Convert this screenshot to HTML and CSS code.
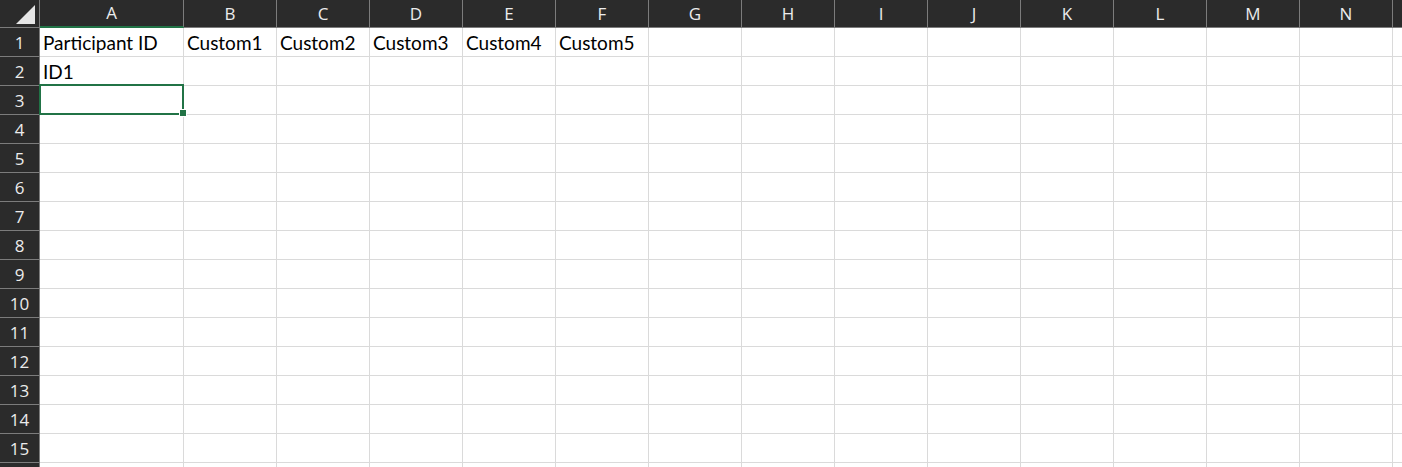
FILE: index.html
```html
<!DOCTYPE html>
<html lang="en">
<head>
    <meta charset="UTF-8">
    <title>Sheet1</title>
    <link rel="stylesheet" href="styles.css">
</head>
<body>
    <div class="sheet" id="sheet"></div>

    <script>
        const sheet = document.getElementById('sheet');
        const columns = ['A', 'B', 'C', 'D', 'E', 'F', 'G', 'H', 'I', 'J', 'K', 'L', 'M', 'N', ''];
        const data = {
            1: ['Participant ID', 'Custom1', 'Custom2', 'Custom3', 'Custom4', 'Custom5'],
            2: ['ID1']
        };

        // header row
        const corner = document.createElement('div');
        corner.className = 'corner';
        corner.innerHTML = '<svg width="20" height="20" viewBox="0 0 20 20"><polygon points="19,0 19,19 0,19" fill="#e6e6e6"/></svg>';
        sheet.appendChild(corner);

        columns.forEach((col, i) => {
            const head = document.createElement('div');
            head.className = 'col-head' + (i === 0 ? ' active' : '') + (col === '' ? ' last' : '');
            head.textContent = col;
            sheet.appendChild(head);
        });

        for (let r = 1; r <= 16; r++) {
            const rowHead = document.createElement('div');
            rowHead.className = 'row-head';
            // row 16 is only a sliver at the bottom edge
            rowHead.textContent = r < 16 ? r : '';
            sheet.appendChild(rowHead);

            columns.forEach((col, i) => {
                const cell = document.createElement('div');
                cell.className = 'cell' + (col === '' ? ' last' : '');
                const values = data[r] || [];
                if (values[i]) cell.textContent = values[i];
                if (r === 3 && i === 0) {
                    cell.classList.add('selected');
                    cell.innerHTML = '<span class="handle"></span>';
                }
                sheet.appendChild(cell);
            });
        }
    </script>
</body>
</html>
```

FILE: styles.css
```css
html, body {
    margin: 0;
    padding: 0;
    height: 100%;
    overflow: hidden;
    background: #ffffff;
}

.sheet {
    display: grid;
    grid-template-columns: 40px 144px repeat(13, 93px) 1fr;
    grid-template-rows: 28px repeat(16, 29px);
}

.corner,
.col-head,
.row-head {
    box-sizing: border-box;
    background-color: #2b2b2b;
    color: #ececec;
    font-family: "Open Sans", "Segoe UI", sans-serif;
    font-size: 17px;
    border-right: 1px solid #7c7c7c;
    border-bottom: 1px solid #7c7c7c;
}

.corner {
    display: flex;
    align-items: flex-start;
    justify-content: flex-end;
    padding: 5px 3px 0 0;
}

.corner svg {
    display: block;
}

.col-head {
    display: flex;
    align-items: center;
    justify-content: center;
    padding-bottom: 1px;
}

.col-head.active {
    border-bottom: 2px solid #217346;
}

.row-head {
    display: flex;
    align-items: center;
    justify-content: center;
    padding-top: 1px;
}

.cell {
    position: relative;
    box-sizing: border-box;
    border-right: 1px solid #dadada;
    border-bottom: 1px solid #dadada;
    padding: 0 3px;
    font-family: Lato, "Open Sans", sans-serif;
    font-size: 19px;
    color: #000000;
    line-height: 30px;
    white-space: nowrap;
}

.col-head.last,
.cell.last {
    border-right: none;
}

.cell.selected::after {
    content: "";
    position: absolute;
    top: -2px;
    left: -1px;
    right: -1px;
    bottom: -1px;
    border: 2px solid #217346;
}

.handle {
    position: absolute;
    right: -4px;
    bottom: -3px;
    width: 6px;
    height: 6px;
    background: #217346;
    border: 1px solid #ffffff;
    z-index: 1;
}
```
